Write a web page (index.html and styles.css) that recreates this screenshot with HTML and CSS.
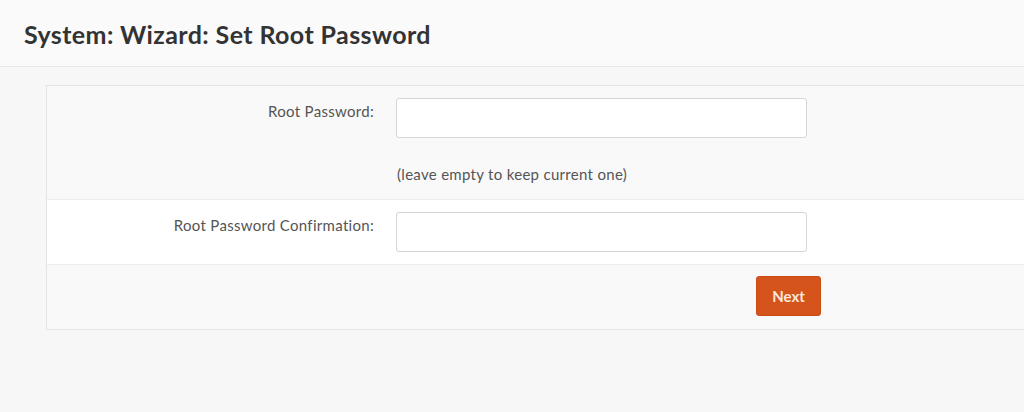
FILE: index.html
```html
<!DOCTYPE html>
<html lang="en">
<head>
<meta charset="utf-8">
<title>System: Wizard: Set Root Password</title>
<link rel="stylesheet" href="styles.css">
</head>
<body>
<header class="page-head">
  <h1 class="page-title">System: Wizard: Set Root Password</h1>
</header>
<main class="content">
  <form class="panel">
    <div class="row row-alt">
      <label class="label" for="pw1">Root Password:</label>
      <div class="field">
        <input class="input" id="pw1" type="password">
        <div class="help">(leave empty to keep current one)</div>
      </div>
    </div>
    <div class="row row-white">
      <label class="label" for="pw2">Root Password Confirmation:</label>
      <div class="field">
        <input class="input" id="pw2" type="password">
      </div>
    </div>
    <div class="row row-alt row-actions">
      <button class="btn-next" type="button">Next</button>
    </div>
  </form>
</main>
</body>
</html>
```
FILE: styles.css
```css
html, body {
  margin: 0;
  padding: 0;
}
body {
  background: #f7f7f7;
  font-family: Lato, "Noto Sans", sans-serif;
  color: #555;
  overflow: hidden;
  width: 1024px;
  height: 412px;
}
.page-head {
  height: 67px;
  background: #fafafa;
  border-bottom: 1px solid #e8e8e8;
  display: flex;
  align-items: center;
  padding-left: 24px;
  padding-top: 1px;
  box-sizing: border-box;
}
.page-title {
  margin: 0;
  font-size: 25px;
  font-weight: 700;
  color: #333;
  letter-spacing: 0.4px;
}
.content {
  padding: 18px 0 0 46px;
}
.panel {
  width: 1020px;
  border: 1px solid #e4e4e4;
  background: #fff;
}
.row {
  display: grid;
  grid-template-columns: 327px 1fr;
  column-gap: 22px;
  border-top: 1px solid #ececec;
}
.row:first-child {
  border-top: none;
}
.row-alt {
  background: #f9f9f9;
}
.row-white {
  background: #fff;
}
.label {
  text-align: right;
  font-size: 15px;
  letter-spacing: 0.3px;
  padding-top: 16px;
  color: #555;
}
.field {
  padding: 12px 0 0 0;
}
.input {
  display: block;
  width: 411px;
  height: 40px;
  box-sizing: border-box;
  border: 1px solid #d6d6d6;
  border-radius: 3px;
  background: #fff;
  margin: 0 0 12px 0;
}
.help {
  font-size: 15px;
  letter-spacing: 0.3px;
  color: #555;
  padding: 15px 0 0 1px;
  box-sizing: border-box;
  height: 49px;
}
.row-actions {
  display: flex;
  padding: 11px 0 12px 709px;
  height: 65px;
  box-sizing: border-box;
}
.btn-next {
  width: 65px;
  height: 40px;
  background: #d4541c;
  border: 1px solid #c94c15;
  border-radius: 3px;
  color: #fbe8dc;
  font-family: Lato, "Noto Sans", sans-serif;
  font-size: 15px;
  font-weight: 700;
  padding: 0;
}
```
